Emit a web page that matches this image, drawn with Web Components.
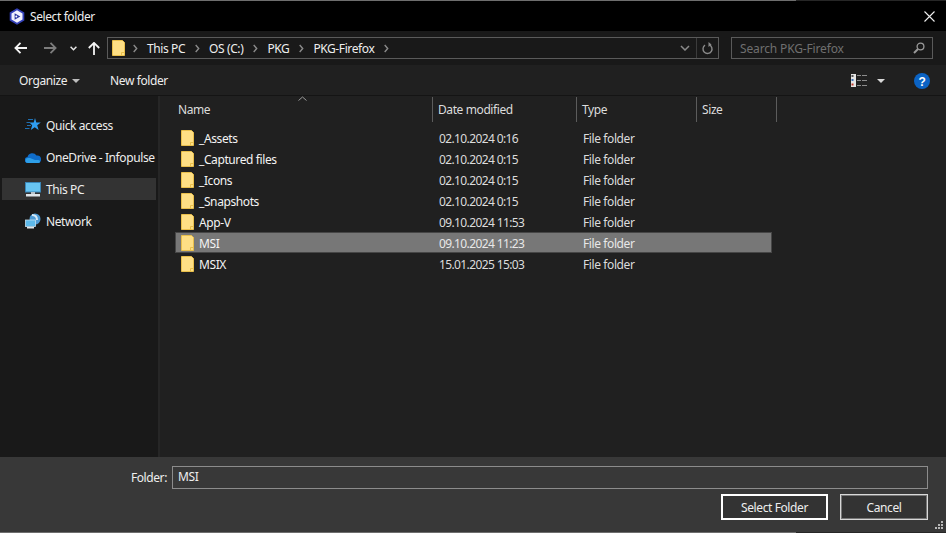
<!DOCTYPE html>
<html>
<head>
<meta charset="utf-8">
<title>Select folder</title>
<style>
    html, body { margin: 0; height: 100%; background: #000; overflow: hidden; }
    body { font: 12px "Noto Sans", sans-serif; color: #fff; }
</style>
</head>
<body>
<folder-dialog>
    <dialog-titlebar>Select folder</dialog-titlebar>
    <dialog-nav></dialog-nav>
    <dialog-toolbar></dialog-toolbar>
    <dialog-main>
        <dialog-sidebar slot="side"></dialog-sidebar>
        <file-list slot="list"></file-list>
    </dialog-main>
    <dialog-footer></dialog-footer>
</folder-dialog>

<script>
const FOLDER = `<svg width="13" height="16" viewBox="0 0 13 16" style="display:block;flex:none">
    <path d="M.5.5h10l2 2v13H.5z" fill="#fedf85" stroke="#e9bf4b"/>
    <path d="M9.500 15.500v-3h3" fill="none" stroke="#e9bf4b"/>
</svg>`;

class FolderDialog extends HTMLElement {
    constructor() {
        super();
        this.attachShadow({ mode: 'open' });
        this.shadowRoot.innerHTML = `
            <style>
                :host {
                    display: flex;
                    flex-direction: column;
                    width: 946px;
                    height: 533px;
                    box-sizing: border-box;
                    border-top: 1px solid;
                    border-bottom: 1px solid #6e6e6e;
                    border-image: linear-gradient(90deg, #6e6e6e 796px, #262626 796px) 1 0;
                    letter-spacing: -0.4px;
                }
            </style>
            <slot></slot>
        `;
    }
}

class DialogTitlebar extends HTMLElement {
    constructor() {
        super();
        this.attachShadow({ mode: 'open' });
        this.shadowRoot.innerHTML = `
            <style>
                :host {
                    display: flex;
                    align-items: center;
                    height: 30px;
                    flex: none;
                    padding: 0 11px 0 9px;
                    background: #000;
                    color: #eee;
                }
                svg { display: block; }
                .text { margin-left: 5px; flex: 1; }
            </style>
            <svg width="16" height="17" viewBox="0 0 16 17">
                <path d="M8 .3 15.300 4.500v8L8 16.700.7 12.500v-8z" fill="#3441b8"/>
                <path d="M8 2.300 13.500 5.500v6L8 14.700 2.500 11.500v-6z" fill="#f2f2ff"/>
                <path d="M5.600 5.200v6.600L11.300 8.500z" fill="#2b36a0"/>
                <circle cx="7.300" cy="8.500" r="1" fill="#fff"/>
            </svg>
            <div class="text"><slot></slot></div>
            <svg width="11" height="11" viewBox="0 0 11 11">
                <path d="M.5.5l10 10M10.500.5l-10 10" stroke="#eee" stroke-width="1.100"/>
            </svg>
        `;
    }
}

class DialogNav extends HTMLElement {
    constructor() {
        super();
        this.attachShadow({ mode: 'open' });
        const crumbs = ['This PC', 'OS (C:)', 'PKG', 'PKG-Firefox'];
        const sep = `<svg class="sep" width="5" height="9" viewBox="0 0 5 9"><path d="M.7 1l3 3.500-3 3.500" fill="none" stroke="#8a8a8a" stroke-width="1.400"/></svg>`;
        this.shadowRoot.innerHTML = `
            <style>
                :host {
                    display: flex;
                    align-items: center;
                    height: 34px;
                    flex: none;
                    background: #191919;
                    box-sizing: border-box;
                    padding-left: 14px;
                }
                svg { display: block; flex: none; }
                .back { margin-right: 17px; }
                .fwd { margin-right: 13px; }
                .drop { margin-right: 11px; }
                .up { margin-right: 7px; }
                .address, .search {
                    display: flex;
                    align-items: center;
                    height: 22px;
                    box-sizing: border-box;
                    border: 1px solid #5a5a5a;
                }
                .address { width: 612px; padding-left: 4px; margin-right: 12px; }
                .address .crumb { margin: 0 10px 0 9px; color: #eee; }
                .address > svg.folder { margin-right: 8px; }
                .spacer { flex: 1; }
                .split { width: 1px; align-self: stretch; background: #3c3c3c; }
                .search {
                    width: 202px;
                    padding: 0 7px 0 8px;
                    justify-content: space-between;
                    color: #6f6f6f;
                    letter-spacing: -0.15px;
                }
            </style>
            <svg class="back" width="13" height="12" viewBox="0 0 13 12"><path d="M6.500.8 1.400 6l5.100 5.200M1.500 6H13" fill="none" stroke="#f4f4f4" stroke-width="1.800"/></svg>
            <svg class="fwd" width="13" height="12" viewBox="0 0 13 12"><path d="M6.500.8 11.600 6l-5.100 5.200M11.500 6H0" fill="none" stroke="#7c7c7c" stroke-width="1.800"/></svg>
            <svg class="drop" width="7" height="5" viewBox="0 0 7 5"><path d="M.6.800 3.500 3.700 6.400.8" fill="none" stroke="#e8e8e8" stroke-width="1.500"/></svg>
            <svg class="up" width="12" height="13" viewBox="0 0 12 13"><path d="M.8 6 6 .9 11.200 6M6 1v12" fill="none" stroke="#f4f4f4" stroke-width="1.800"/></svg>
            <div class="address">
                <svg class="folder" width="13" height="16" viewBox="0 0 13 16"><path d="M.5.500h10l2 2v13H.5z" fill="#fedf85" stroke="#e9bf4b"/><path d="M9.500 15.500v-3h3" fill="none" stroke="#e9bf4b"/></svg>
                ${sep}
                ${crumbs.map(c => `<span class="crumb">${c}</span>${sep}`).join('')}
                <span class="spacer"></span>
                <svg width="10" height="6" viewBox="0 0 10 6" style="margin-right:6px"><path d="M1 1l4 4 4-4" fill="none" stroke="#8a8a8a" stroke-width="1.500"/></svg>
                <span class="split"></span>
                <svg width="12" height="13" viewBox="0 0 12 13" style="margin:0 4px 0 5px"><path d="M7 2.700A4.500 4.500 0 1 1 3 3.200" fill="none" stroke="#8a8a8a" stroke-width="1.400"/><path d="M6.500 0v5l3-2.500z" fill="#8a8a8a"/></svg>
            </div>
            <div class="search">
                <span>Search PKG-Firefox</span>
                <svg width="12" height="12" viewBox="0 0 12 12"><circle cx="7.500" cy="4.500" r="3.400" fill="none" stroke="#9a9a9a" stroke-width="1.300"/><path d="M5 7 1 11" stroke="#9a9a9a" stroke-width="2"/></svg>
            </div>
        `;
    }
}

class DialogToolbar extends HTMLElement {
    constructor() {
        super();
        this.attachShadow({ mode: 'open' });
        this.shadowRoot.innerHTML = `
            <style>
                :host {
                    display: flex;
                    align-items: center;
                    height: 31px;
                    flex: none;
                    background: #202020;
                    padding: 1px 0 0 19px;
                    box-sizing: border-box;
                    border-bottom: 1px solid #141414;
                    color: #eee;
                }
                svg { display: block; flex: none; }
                .caret { margin: 0 30px 0 5px; }
                .spacer { flex: 1; }
            </style>
            <span>Organize</span>
            <svg class="caret" width="8" height="4" viewBox="0 0 8 4"><path d="M0 0h8L4 4z" fill="#bdbdbd"/></svg>
            <span>New folder</span>
            <span class="spacer"></span>
            <svg width="16" height="13" viewBox="0 0 16 13">
                <rect x="0" y="0" width="5" height="13" fill="#e4e4e4"/>
                <path d="M1.500 1v2" stroke="#555" stroke-width="2"/>
                <path d="M1.500 5v2" stroke="#3b6fb5" stroke-width="2"/>
                <path d="M1.500 9.500v2" stroke="#c0392b" stroke-width="2"/>
                <path d="M6 1.500h4M11 1.500h5M6 6.500h4M11 6.500h5M6 11.500h4M11 11.500h5" stroke="#8c8c8c"/>
            </svg>
            <svg width="8" height="4" viewBox="0 0 8 4" style="margin:0 29px 0 10px"><path d="M0 0h8L4 4z" fill="#d8d8d8"/></svg>
            <svg width="16" height="16" viewBox="0 0 16 16" style="margin-right:16px">
                <circle cx="8" cy="8" r="8" fill="#0b63c4"/>
                <text x="8" y="12.500" text-anchor="middle" font-family="Liberation Sans" font-weight="700" font-size="12" fill="#fff">?</text>
            </svg>
        `;
    }
}

class DialogMain extends HTMLElement {
    constructor() {
        super();
        this.attachShadow({ mode: 'open' });
        this.shadowRoot.innerHTML = `
            <style>
                :host {
                    display: grid;
                    grid-template-columns: 158px 2px 1fr;
                    flex: 1;
                    min-height: 0;
                    background: #202020;
                }
                .rule { background: #262626; }
            </style>
            <slot name="side"></slot>
            <div class="rule"></div>
            <slot name="list"></slot>
        `;
    }
}

class DialogSidebar extends HTMLElement {
    constructor() {
        super();
        this.attachShadow({ mode: 'open' });
        const icons = {
            star: `<svg width="16" height="14" viewBox="0 0 16 14"><path d="M10 0l1.300 4.400h4.500l-3.600 2.800 1.400 4.800L9.700 9.200 5.800 12l1.400-4.800L4.500 4.400h4.200z" fill="#2f9df0"/><path d="M3 1.500h5M1.500 4.500H5M2 7.500h4M0 10.500h4.500" stroke="#1f6fb0"/></svg>`,
            cloud: `<svg width="16" height="11" viewBox="0 0 16 11"><path d="M3 11a3 3 0 0 1-.5-6A5 5 0 0 1 11.500 3.500 3.800 3.800 0 0 1 13 11z" fill="#0f6cc9"/><path d="M3 11a2.500 2.500 0 0 1 0-5h2l5 2h3.500a1.500 1.500 0 0 1 0 3z" fill="#2e9fe8"/></svg>`,
            pc: `<svg width="16" height="15" viewBox="0 0 16 15"><rect x=".5" y=".5" width="15" height="9.500" fill="#68c5f2" stroke="#3a86b8"/><rect x="6" y="10" width="4" height="2" fill="#b8c4cc"/><rect x="1" y="12" width="14" height="2.500" fill="#dfe5e9"/></svg>`,
            net: `<svg width="16" height="16" viewBox="0 0 16 16"><circle cx="10" cy="6" r="5.500" fill="#4d9ad4"/><path d="M7 2c3 0 5 2 5 5" stroke="#d5e9f6" stroke-width="2" fill="none"/><rect x=".5" y="7" width="10" height="6.500" fill="#5db9ea" stroke="#c4dfee" stroke-width=".8"/><rect x="2" y="14" width="7" height="1.500" fill="#dfe5e9"/></svg>`
        };
        const items = [
            ['star', 'Quick access'],
            ['cloud', 'OneDrive - Infopulse'],
            ['pc', 'This PC', true],
            ['net', 'Network']
        ];
        this.shadowRoot.innerHTML = `
            <style>
                :host {
                    display: flex;
                    flex-direction: column;
                    gap: 10px;
                    background: #191919;
                    padding: 18px 2px 0 2px;
                    box-sizing: border-box;
                }
                .item {
                    display: flex;
                    align-items: center;
                    height: 22px;
                    padding-left: 23px;
                    color: #eee;
                    white-space: nowrap;
                }
                .item.on { background: #333; }
                .ico { width: 16px; margin-right: 5px; display: flex; justify-content: center; }
            </style>
            ${items.map(([ico, label, on]) => `
                <div class="item${on ? ' on' : ''}"><span class="ico">${icons[ico]}</span>${label}</div>
            `).join('')}
        `;
    }
}

class FileList extends HTMLElement {
    constructor() {
        super();
        this.attachShadow({ mode: 'open' });
        const rows = [
            ['_Assets', '02.10.2024 0:16'],
            ['_Captured files', '02.10.2024 0:15'],
            ['_Icons', '02.10.2024 0:15'],
            ['_Snapshots', '02.10.2024 0:15'],
            ['App-V', '09.10.2024 11:53'],
            ['MSI', '09.10.2024 11:23', true],
            ['MSIX', '15.01.2025 15:03']
        ];
        this.shadowRoot.innerHTML = `
            <style>
                :host {
                    display: block;
                    min-width: 0;
                    color: #eee;
                    padding: 1px 0 0 15px;
                    position: relative;
                }
                .head {
                    display: grid;
                    grid-template-columns: 258px 144px 120px 80px;
                    height: 25px;
                    margin-bottom: 5px;
                    color: #dcdcdc;
                }
                .head div {
                    display: flex;
                    align-items: center;
                    padding-left: 5px;
                    border-right: 1px solid #5c5c5c;
                }
                .head div:first-child { padding-left: 3px; }
                .sort { position: absolute; left: 138px; top: 0; display: block; }
                .row {
                    display: grid;
                    grid-template-columns: 258px 144px 1fr;
                    align-items: center;
                    width: 597px;
                    height: 21px;
                    box-sizing: border-box;
                    border: 1px solid transparent;
                }
                .row.on { background: #777; border-color: #464646; }
                .name { display: flex; align-items: center; gap: 5px; padding-left: 5px; color: #f4f4f4; }
                .name span, .cell { padding-top: 2px; }
                .cell { padding-left: 5px; color: #dcdcdc; }
                .date { letter-spacing: -0.62px; }
                .row.on .cell { color: #e8e8e8; }
            </style>
            <svg class="sort" width="9" height="5" viewBox="0 0 9 5"><path d="M.5 4.500l4-3.500 4 3.500" fill="none" stroke="#9a9a9a"/></svg>
            <div class="head">
                <div>Name</div><div>Date modified</div><div>Type</div><div>Size</div>
            </div>
            ${rows.map(([name, date, on]) => `
                <div class="row${on ? ' on' : ''}">
                    <div class="name">${FOLDER}<span>${name}</span></div>
                    <div class="cell date">${date}</div>
                    <div class="cell">File folder</div>
                </div>
            `).join('')}
        `;
    }
}

class DialogFooter extends HTMLElement {
    constructor() {
        super();
        this.attachShadow({ mode: 'open' });
        this.shadowRoot.innerHTML = `
            <style>
                :host {
                    display: flex;
                    flex-direction: column;
                    height: 75px;
                    flex: none;
                    background: #383838;
                    box-sizing: border-box;
                    padding: 9px 18px 0 0;
                    color: #eee;
                    position: relative;
                }
                .field { display: flex; align-items: center; justify-content: flex-end; gap: 5px; }
                .input {
                    width: 756px;
                    height: 23px;
                    box-sizing: border-box;
                    border: 1px solid #8c8c8c;
                    padding: 0 5px;
                    line-height: 20px;
                }
                .buttons { display: flex; justify-content: flex-end; gap: 12px; margin-top: 5px; }
                .btn {
                    display: flex;
                    align-items: center;
                    justify-content: center;
                    height: 26px;
                    box-sizing: border-box;
                    background: #333;
                }
                .primary { width: 107px; border: 2px solid #fff; }
                .cancel { width: 88px; border: 1px solid #d8d8d8; box-shadow: inset 0 0 0 1px #777; }
                .grip { position: absolute; right: 3px; bottom: 3px; display: block; }
            </style>
            <div class="field"><span>Folder:</span><div class="input">MSI</div></div>
            <div class="buttons">
                <div class="btn primary">Select Folder</div>
                <div class="btn cancel">Cancel</div>
            </div>
            <svg class="grip" width="8" height="8" viewBox="0 0 8 8"><path d="M6 0h2v2H6zM3 3h2v2H3zM6 3h2v2H6zM0 6h2v2H0zM3 6h2v2H3zM6 6h2v2H6z" fill="#b8b8b8"/></svg>
        `;
    }
}

customElements.define('folder-dialog', FolderDialog);
customElements.define('dialog-titlebar', DialogTitlebar);
customElements.define('dialog-nav', DialogNav);
customElements.define('dialog-toolbar', DialogToolbar);
customElements.define('dialog-main', DialogMain);
customElements.define('dialog-sidebar', DialogSidebar);
customElements.define('file-list', FileList);
customElements.define('dialog-footer', DialogFooter);
</script>
</body>
</html>
